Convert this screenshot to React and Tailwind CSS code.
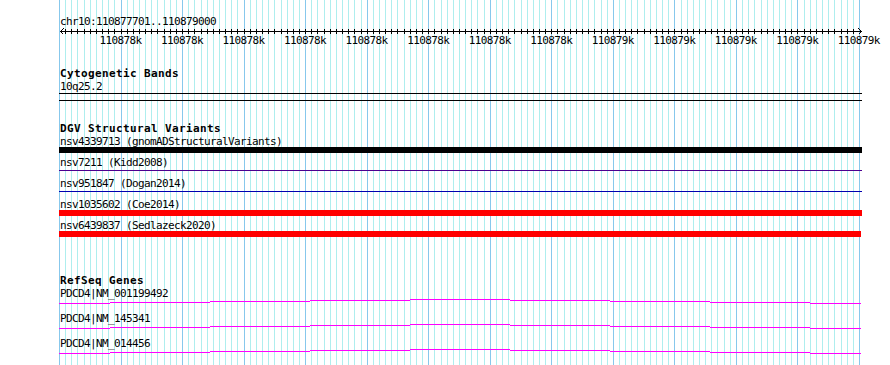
import React from "react";

const minorX = Array.from({ length: 131 }, (_, i) => Math.round(59 + (i * 800) / 130));

function Grid() {
  return (
    <svg className="absolute inset-0" width="890" height="365" shapeRendering="crispEdges">
      {minorX.map((x, i) =>
        i % 10 === 0 ? null : <rect key={"m" + i} x={x} y={0} width={1} height={365} fill="#aeeeee" />
      )}
      {minorX.map((x, i) =>
        i % 10 === 0 ? <rect key={"M" + i} x={x} y={0} width={1} height={365} fill="#87c8ec" /> : null
      )}
    </svg>
  );
}

function Ruler() {
  return (
    <svg className="block" width="890" height="7" shapeRendering="crispEdges">
      <rect x={60} y={3} width={802} height={1} fill="#000" />
      {minorX.slice(1, 130).map((x, i) => (
        <rect key={i} x={x} y={1} width={1} height={5} fill="#000" />
      ))}
      <path d="M63.5 0.5 L60.5 3.5 L63.5 6.5" stroke="#000" fill="none" strokeWidth="1" />
      <path d="M858.5 0.5 L861.5 3.5 L858.5 6.5" stroke="#000" fill="none" strokeWidth="1" />
    </svg>
  );
}

const labels = [
  "110878k", "110878k", "110878k", "110878k", "110878k", "110878k", "110878k", "110878k",
  "110879k", "110879k", "110879k", "110879k", "110879k",
];

function Header({ children, className = "" }) {
  return <div className={"pl-[60px] h-[13px] font-bold tracking-[0.38px] " + className}>{children}</div>;
}

function DgvRow({ label, kind, color, w = 803 }) {
  return (
    <div className="h-[21px]">
      <div className="pl-[60px] h-[12px] whitespace-pre">{label}</div>
      <div className="h-[6px] ml-[59px] flex flex-col">
        {kind === "thick" ? (
          <div className="h-[6px]" style={{ width: w, background: color }} />
        ) : (
          <div className="mt-[2px] h-[1px]" style={{ width: w, background: color }} />
        )}
      </div>
    </div>
  );
}

const steps = [
  [0, 51, 4], [51, 151, 3], [151, 251, 2], [251, 351, 1], [351, 451, 0],
  [451, 551, 1], [551, 651, 2], [651, 751, 3], [751, 802, 4],
];

function GeneRow({ label }) {
  return (
    <div className="h-[25px]">
      <div className="pl-[60px] h-[12px] whitespace-pre">{label}</div>
      <svg className="block ml-[59px]" width="803" height="5" shapeRendering="crispEdges">
        {steps.map(([a, b, y], i) => (
          <rect key={i} x={a} y={y} width={b - a} height={1} fill="#ff00ff" />
        ))}
      </svg>
    </div>
  );
}

export default function App() {
  return (
    <div className="relative w-[890px] h-[365px] bg-white overflow-hidden text-black text-[11px] leading-[13px] tracking-[-0.62px] font-['DejaVu_Sans_Mono',monospace]">
      <Grid />
      <div className="relative pt-[15px]">
        <div className="pl-[60px] h-[13px]">chr10:110877701..110879000</div>
        <Ruler />
        <div className="flex ml-[89.73px] -mt-[1px] h-[13px]">
          {labels.map((l, i) => (
            <div key={i} className="w-[61.538px] shrink-0 text-center">{l}</div>
          ))}
        </div>

        <Header className="mt-[20px]">Cytogenetic Bands</Header>
        <div className="pl-[60px] h-[13px]">10q25.2</div>
        <div className="ml-[59px] w-[803px] h-[8px] border-y border-black" />

        <Header className="mt-[21px]">DGV Structural Variants</Header>
        <DgvRow label="nsv4339713 (gnomADStructuralVariants)" kind="thick" color="#000000" />
        <DgvRow label="nsv7211 (Kidd2008)" kind="thin" color="#4b0090" />
        <DgvRow label="nsv951847 (Dogan2014)" kind="thin" color="#0000b0" />
        <DgvRow label="nsv1035602 (Coe2014)" kind="thick" color="#ff0000" />
        <DgvRow label="nsv6439837 (Sedlazeck2020)" kind="thick" color="#ff0000" w={802} />

        <Header className="mt-[34px]">RefSeq Genes</Header>
        <GeneRow label="PDCD4|NM_001199492" />
        <GeneRow label="PDCD4|NM_145341" />
        <GeneRow label="PDCD4|NM_014456" />
      </div>
    </div>
  );
}
